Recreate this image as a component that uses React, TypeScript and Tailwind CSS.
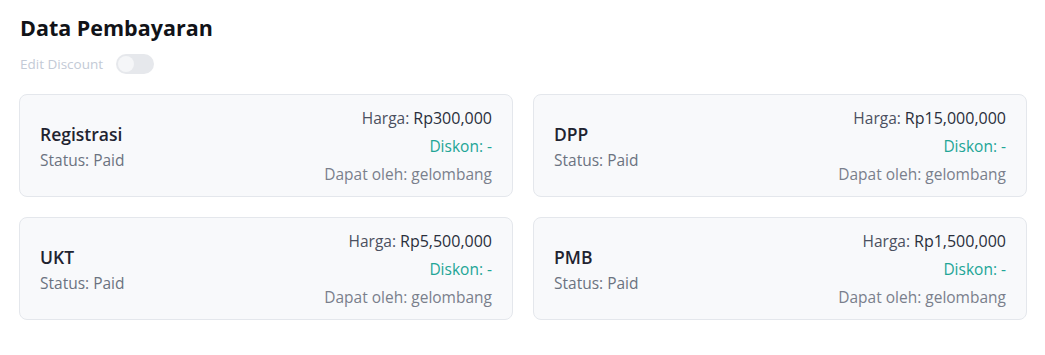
import React, { useState } from 'react';

type Payment = {
    name: string;
    status: string;
    harga: string;
    diskon: string;
    dapatOleh: string;
};

const payments: Payment[] = [
    { name: 'Registrasi', status: 'Paid', harga: 'Rp300,000', diskon: '-', dapatOleh: 'gelombang' },
    { name: 'DPP', status: 'Paid', harga: 'Rp15,000,000', diskon: '-', dapatOleh: 'gelombang' },
    { name: 'UKT', status: 'Paid', harga: 'Rp5,500,000', diskon: '-', dapatOleh: 'gelombang' },
    { name: 'PMB', status: 'Paid', harga: 'Rp1,500,000', diskon: '-', dapatOleh: 'gelombang' },
];

const PaymentCard: React.FC<{ item: Payment }> = ({ item }) => (
    <div className="flex items-center justify-between h-[103px] pl-5 pr-5 bg-[#f8f9fb] border border-[#e4e7ec] rounded-lg">
        <div className="mt-px">
            <div className="text-[17.5px] font-semibold text-[#1f2330] leading-6">{item.name}</div>
            <div className="text-[15.5px] text-[#6b7280] leading-5 mt-[4px]">Status: {item.status}</div>
        </div>
        <div className="text-right text-[15.5px] leading-7 flex flex-col">
            <div className="text-[#4b5060]">Harga: <span className="text-[#2a2f3c] font-medium text-[16px]">{item.harga}</span></div>
            <div className="text-[#22a596]">Diskon: {item.diskon}</div>
            <div className="text-[#7a7f8c]">Dapat oleh: {item.dapatOleh}</div>
        </div>
    </div>
);

export default function App() {
    const [editDiscount, setEditDiscount] = useState(false);

    return (
        <div className="min-h-[355px] bg-white px-5 pt-[12px] font-['Open_Sans',sans-serif]">
            <h1 className="text-[21.5px] font-bold text-[#111318] leading-8">Data Pembayaran</h1>
            <div className="flex items-center gap-[13px] mt-[10px] h-5">
                <span className="text-[13.5px] text-[#c3cad6]">Edit Discount</span>
                <button
                    onClick={() => setEditDiscount(v => !v)}
                    className="relative w-[38px] h-5 rounded-full bg-[#e6e8ec]"
                >
                    <span className={`absolute top-[2px] left-[2px] w-4 h-4 rounded-full bg-[#f5f6f8] ${editDiscount ? 'translate-x-[18px]' : ''}`} />
                </button>
            </div>
            <div className="grid grid-cols-2 gap-5 mt-5 w-[1008px] -ml-px">
                {payments.map(p => (
                    <PaymentCard key={p.name} item={p} />
                ))}
            </div>
        </div>
    );
}
